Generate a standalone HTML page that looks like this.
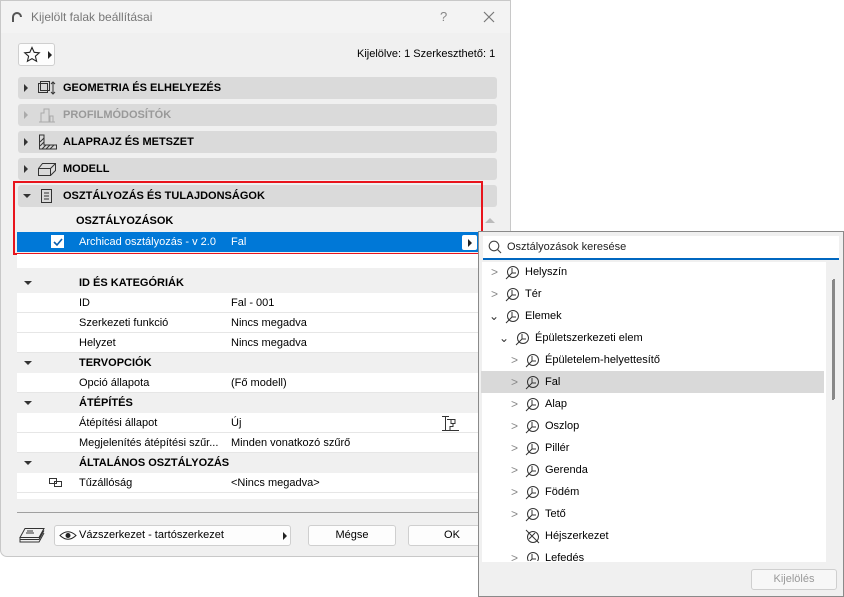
<!DOCTYPE html>
<html><head><meta charset="utf-8"><style>
*{box-sizing:border-box;margin:0;padding:0}
body{width:844px;height:597px;background:#fff;font-family:"Liberation Sans",sans-serif;font-size:11px;color:#000;position:relative;overflow:hidden}
.a{position:absolute}
#dlg{left:0;top:0;width:511px;height:557px;background:#f0f0f0;border:1px solid #c8c8c8;border-radius:0 0 7px 7px}
.hdr{position:absolute;left:17px;width:479px;height:22px;background:#dadada;border-radius:3px;font-weight:bold;font-size:11px;line-height:22px}
.hdr .t{position:absolute;left:45px}
.hdr .tri{position:absolute;left:6px;top:7px;width:0;height:0;border-left:4px solid #333;border-top:4px solid transparent;border-bottom:4px solid transparent}
.hdr .dn{position:absolute;left:5px;top:9px;width:0;height:0;border-top:4px solid #333;border-left:4px solid transparent;border-right:4px solid transparent}
.row{position:absolute;left:16px;width:462px;height:20px;line-height:20px;background:#fff;border-bottom:1px solid #e6e6e6}
.sec{position:absolute;left:16px;width:462px;height:20px;line-height:20px;background:#f0f0f0;font-weight:bold}
.row .l,.sec .l{position:absolute;left:62px}
.row .v{position:absolute;left:214px}
.sec .dn{position:absolute;left:7px;top:8px;border-top:4px solid #333;border-left:4px solid transparent;border-right:4px solid transparent}
.btn{position:absolute;height:21px;background:#fdfdfd;border:1px solid #cfcfcf;border-radius:3px;text-align:center;line-height:19px}
#pop{left:478px;top:231px;width:366px;height:366px;background:#f0f0f0;border:1px solid #8a8a8a}
.it{position:absolute;left:3px;width:342px;height:22px;line-height:22px;font-size:11px}
.it .c{position:absolute;top:0;color:#888;font-size:12px}
.it svg{position:absolute;top:4px}
</style></head><body>
<div id="dlg" class="a">
 <div class="a" style="left:0;top:0;width:509px;height:32px;background:#f3f3f3"></div>
 <svg class="a" style="left:10px;top:10px" width="12" height="12"><path d="M2 11V6a4 4 0 0 1 8 0" fill="none" stroke="#555" stroke-width="2"/></svg>
 <div class="a" style="left:30px;top:9px;color:#777;font-size:12px">Kijelölt falak beállításai</div>
 <div class="a" style="left:439px;top:8px;color:#888;font-size:13px">?</div>
 <svg class="a" style="left:482px;top:10px" width="12" height="12"><path d="M1 1L11 11M11 1L1 11" stroke="#777" stroke-width="1.2"/></svg>
 <div class="btn" style="left:17px;top:42px;width:37px;height:23px"></div>
 <svg class="a" style="left:22px;top:45px" width="18" height="17"><path d="M9 1.5L11.2 6.3L16.3 6.8L12.4 10.2L13.6 15.3L9 12.6L4.4 15.3L5.6 10.2L1.7 6.8L6.8 6.3Z" fill="none" stroke="#222" stroke-width="1.1"/></svg>
 <div class="a" style="left:47px;top:50px;border-left:4px solid #222;border-top:4px solid transparent;border-bottom:4px solid transparent"></div>
 <div class="a" style="left:356px;top:47px">Kijelölve: 1 Szerkeszthető: 1</div>

 <div class="hdr" style="top:76px"><span class="tri"></span>
  <svg class="a" style="left:19px;top:3px" width="20" height="16"><rect x="1.5" y="3.5" width="9" height="9" fill="none" stroke="#333"/><rect x="3.5" y="1.5" width="9" height="9" fill="none" stroke="#333"/><path d="M16 2v12M14 4l2-2 2 2M14 12l2 2 2-2" fill="none" stroke="#333"/></svg>
  <span class="t">GEOMETRIA ÉS ELHELYEZÉS</span></div>
 <div class="hdr" style="top:103px;color:#999"><span class="tri" style="border-left-color:#aaa"></span>
  <svg class="a" style="left:20px;top:3px" width="18" height="16"><path d="M3 15V6h3V2h5v13M1 15h16M12 15V9h3v6" fill="none" stroke="#aaa"/></svg>
  <span class="t">PROFILMÓDOSÍTÓK</span></div>
 <div class="hdr" style="top:130px"><span class="tri"></span>
  <svg class="a" style="left:20px;top:3px" width="20" height="16"><path d="M1.5 1v14h17v-4H6V1Z" fill="none" stroke="#333"/><path d="M2 8l4-4M2 12l4-4M4 15l4-4M8 15l4-4M12 15l4-4" stroke="#333"/></svg>
  <span class="t">ALAPRAJZ ÉS METSZET</span></div>
 <div class="hdr" style="top:157px"><span class="tri"></span>
  <svg class="a" style="left:19px;top:3px" width="20" height="16"><path d="M1.5 7.5h12v7h-12zM1.5 7.5l4-5h13v7l-5 5M13.5 7.5l5-5" fill="none" stroke="#333"/></svg>
  <span class="t">MODELL</span></div>
 <div class="hdr" style="top:184px"><span class="dn"></span>
  <svg class="a" style="left:22px;top:3px" width="14" height="16"><rect x="1.5" y="1.5" width="10" height="13" fill="none" stroke="#333"/><path d="M4 5h5M4 8h5M4 11h5" stroke="#333"/></svg>
  <span class="t">OSZTÁLYOZÁS ÉS TULAJDONSÁGOK</span></div>
 <div class="a" style="left:75px;top:214px;font-weight:bold">OSZTÁLYOZÁSOK</div>
 <div class="a" style="left:16px;top:231px;width:462px;height:20px;background:#0078d7"></div>
 <div class="a" style="left:50px;top:234px;width:13px;height:13px;background:#fff;border:1px solid #fff"></div>
 <svg class="a" style="left:51px;top:235px" width="12" height="12"><path d="M2 6l3 3 5-6" fill="none" stroke="#0a5fb0" stroke-width="1.6"/></svg>
 <div class="a" style="left:78px;top:235px;color:#fff">Archicad osztályozás - v 2.0</div>
 <div class="a" style="left:230px;top:235px;color:#fff">Fal</div>
 <div class="a" style="left:460px;top:233px;width:17px;height:17px;background:#fff;border:1px solid #0078d7;border-radius:3px"></div>
 <div class="a" style="left:467px;top:238px;border-left:4px solid #222;border-top:4px solid transparent;border-bottom:4px solid transparent"></div>
 <div class="a" style="left:12px;top:180px;width:470px;height:74px;border:2px solid #e8141c"></div>
 <div class="a" style="left:484px;top:217px;border-bottom:5px solid #bbb;border-left:5px solid transparent;border-right:5px solid transparent"></div>

 <div class="a" style="left:16px;top:253px;width:462px;height:14px;background:#fff"></div>
 <div class="sec" style="top:272px"><span class="dn"></span><span class="l">ID ÉS KATEGÓRIÁK</span></div>
 <div class="row" style="top:292px"><span class="l">ID</span><span class="v">Fal - 001</span></div>
 <div class="row" style="top:312px"><span class="l">Szerkezeti funkció</span><span class="v">Nincs megadva</span></div>
 <div class="row" style="top:332px"><span class="l">Helyzet</span><span class="v">Nincs megadva</span></div>
 <div class="sec" style="top:352px"><span class="dn"></span><span class="l">TERVOPCIÓK</span></div>
 <div class="row" style="top:372px"><span class="l">Opció állapota</span><span class="v">(Fő modell)</span></div>
 <div class="sec" style="top:392px"><span class="dn"></span><span class="l">ÁTÉPÍTÉS</span></div>
 <div class="row" style="top:412px"><span class="l">Átépítési állapot</span><span class="v">Új</span>
  <svg class="a" style="left:424px;top:2px" width="18" height="17"><path d="M1 1.5h7M4.5 1.5v14M1 15.5h17M6 4.5h8v4h-4v-4M12 8.5v3h-3v4" fill="none" stroke="#333"/></svg></div>
 <div class="row" style="top:432px"><span class="l">Megjelenítés átépítési szűr...</span><span class="v">Minden vonatkozó szűrő</span></div>
 <div class="sec" style="top:452px"><span class="dn"></span><span class="l">ÁLTALÁNOS OSZTÁLYOZÁS</span></div>
 <div class="row" style="top:472px"><span class="l">Tűzállóság</span><span class="v">&lt;Nincs megadva&gt;</span>
  <svg class="a" style="left:32px;top:5px" width="14" height="9"><rect x="0.5" y="0.5" width="7" height="5" fill="none" stroke="#333"/><rect x="5.5" y="3.5" width="7" height="5" fill="none" stroke="#333"/></svg></div>
 <div class="a" style="left:16px;top:492px;width:462px;height:6px;background:#fff;overflow:hidden"></div>
 <div class="a" style="left:16px;top:511px;width:462px;height:1px;background:#a0a0a0"></div>

 <svg class="a" style="left:18px;top:526px" width="26" height="17"><path d="M6 1.5h19l-5 9H1z M1 10.5v2h19l5-9M1 13v2h19l5-9" fill="none" stroke="#333"/><path d="M8 4h6M7 6h8" stroke="#333"/></svg>
 <div class="btn" style="left:53px;top:524px;width:237px"></div>
 <svg class="a" style="left:58px;top:529px" width="18" height="11"><path d="M1 5.5Q9 -2 17 5.5Q9 13 1 5.5Z" fill="none" stroke="#222"/><circle cx="9" cy="5.5" r="2.5" fill="#222"/></svg>
 <div class="a" style="left:78px;top:528px">Vázszerkezet - tartószerkezet</div>
 <div class="a" style="left:282px;top:531px;border-left:4px solid #222;border-top:4px solid transparent;border-bottom:4px solid transparent"></div>
 <div class="btn" style="left:307px;top:524px;width:88px">Mégse</div>
 <div class="btn" style="left:407px;top:524px;width:88px">OK</div>
</div>

<div id="pop" class="a">
 <div class="a" style="left:4px;top:4px;width:356px;height:24px;background:#fff;border-bottom:2px solid #0067c0"></div>
 <svg class="a" style="left:9px;top:8px" width="14" height="14"><circle cx="6" cy="6" r="4.8" fill="none" stroke="#444" stroke-width="1.1"/><path d="M9.5 9.5L13 13" stroke="#444" stroke-width="1.2"/></svg>
 <div class="a" style="left:28px;top:9px;color:#222">Osztályozások keresése</div>
 <div class="a" style="left:3px;top:30px;width:344px;height:300px;background:#fff;overflow:hidden" id="lst"></div>
 <div class="a" style="left:353px;top:48px;width:2px;height:120px;background:#888"></div>
 <div class="btn" style="left:272px;top:337px;width:86px;color:#999;background:#f7f7f7">Kijelölés</div>
</div>
<div class="a" style="left:478px;top:231px;width:366px;height:366px;overflow:hidden">
 <div class="a" style="left:3px;top:140px;width:343px;height:22px;background:#d9d9d9"></div>
 <div class="a" style="left:0;top:30px;width:350px;height:300px;overflow:hidden">
 <div class="it" style="top:0"><span class="c" style="left:10px">&gt;</span><svg style="left:24px" width="15" height="15"><circle cx="8" cy="7" r="5.5" fill="none" stroke="#333"/><path d="M1 14l6-6M7 3v5h4" fill="none" stroke="#333"/></svg><span class="a" style="left:44px">Helyszín</span></div>
 <div class="it" style="top:22px"><span class="c" style="left:10px">&gt;</span><svg style="left:24px" width="15" height="15"><circle cx="8" cy="7" r="5.5" fill="none" stroke="#333"/><path d="M1 14l6-6M7 3v5h4" fill="none" stroke="#333"/></svg><span class="a" style="left:44px">Tér</span></div>
 <div class="it" style="top:44px"><span class="c" style="left:8px;color:#333">⌄</span><svg style="left:24px" width="15" height="15"><circle cx="8" cy="7" r="5.5" fill="none" stroke="#333"/><path d="M1 14l6-6M7 3v5h4" fill="none" stroke="#333"/></svg><span class="a" style="left:44px">Elemek</span></div>
 <div class="it" style="top:66px"><span class="c" style="left:18px;color:#333">⌄</span><svg style="left:34px" width="15" height="15"><circle cx="8" cy="7" r="5.5" fill="none" stroke="#333"/><path d="M1 14l6-6M7 3v5h4" fill="none" stroke="#333"/></svg><span class="a" style="left:54px">Épületszerkezeti elem</span></div>
 <div class="it" style="top:88px"><span class="c" style="left:30px">&gt;</span><svg style="left:44px" width="15" height="15"><circle cx="8" cy="7" r="5.5" fill="none" stroke="#333"/><path d="M1 14l6-6M7 3v5h4" fill="none" stroke="#333"/></svg><span class="a" style="left:64px">Épületelem-helyettesítő</span></div>
 <div class="it" style="top:110px"><span class="c" style="left:30px">&gt;</span><svg style="left:44px" width="15" height="15"><circle cx="8" cy="7" r="5.5" fill="none" stroke="#333"/><path d="M1 14l6-6M7 3v5h4" fill="none" stroke="#333"/></svg><span class="a" style="left:64px">Fal</span></div>
 <div class="it" style="top:132px"><span class="c" style="left:30px">&gt;</span><svg style="left:44px" width="15" height="15"><circle cx="8" cy="7" r="5.5" fill="none" stroke="#333"/><path d="M1 14l6-6M7 3v5h4" fill="none" stroke="#333"/></svg><span class="a" style="left:64px">Alap</span></div>
 <div class="it" style="top:154px"><span class="c" style="left:30px">&gt;</span><svg style="left:44px" width="15" height="15"><circle cx="8" cy="7" r="5.5" fill="none" stroke="#333"/><path d="M1 14l6-6M7 3v5h4" fill="none" stroke="#333"/></svg><span class="a" style="left:64px">Oszlop</span></div>
 <div class="it" style="top:176px"><span class="c" style="left:30px">&gt;</span><svg style="left:44px" width="15" height="15"><circle cx="8" cy="7" r="5.5" fill="none" stroke="#333"/><path d="M1 14l6-6M7 3v5h4" fill="none" stroke="#333"/></svg><span class="a" style="left:64px">Pillér</span></div>
 <div class="it" style="top:198px"><span class="c" style="left:30px">&gt;</span><svg style="left:44px" width="15" height="15"><circle cx="8" cy="7" r="5.5" fill="none" stroke="#333"/><path d="M1 14l6-6M7 3v5h4" fill="none" stroke="#333"/></svg><span class="a" style="left:64px">Gerenda</span></div>
 <div class="it" style="top:220px"><span class="c" style="left:30px">&gt;</span><svg style="left:44px" width="15" height="15"><circle cx="8" cy="7" r="5.5" fill="none" stroke="#333"/><path d="M1 14l6-6M7 3v5h4" fill="none" stroke="#333"/></svg><span class="a" style="left:64px">Födém</span></div>
 <div class="it" style="top:242px"><span class="c" style="left:30px">&gt;</span><svg style="left:44px" width="15" height="15"><circle cx="8" cy="7" r="5.5" fill="none" stroke="#333"/><path d="M1 14l6-6M7 3v5h4" fill="none" stroke="#333"/></svg><span class="a" style="left:64px">Tető</span></div>
 <div class="it" style="top:264px"><svg style="left:44px" width="15" height="15"><circle cx="8" cy="8" r="5.5" fill="none" stroke="#333"/><path d="M1 1l13 13M4 10l6-6" fill="none" stroke="#333"/></svg><span class="a" style="left:64px">Héjszerkezet</span></div>
 <div class="it" style="top:286px"><span class="c" style="left:30px">&gt;</span><svg style="left:44px" width="15" height="15"><circle cx="8" cy="7" r="5.5" fill="none" stroke="#333"/><path d="M1 14l6-6M7 3v5h4" fill="none" stroke="#333"/></svg><span class="a" style="left:64px">Lefedés</span></div>
 </div>
 <div class="a" style="left:355px;top:48px;width:2px;height:120px;background:#888"></div>
</div>
</body></html>
